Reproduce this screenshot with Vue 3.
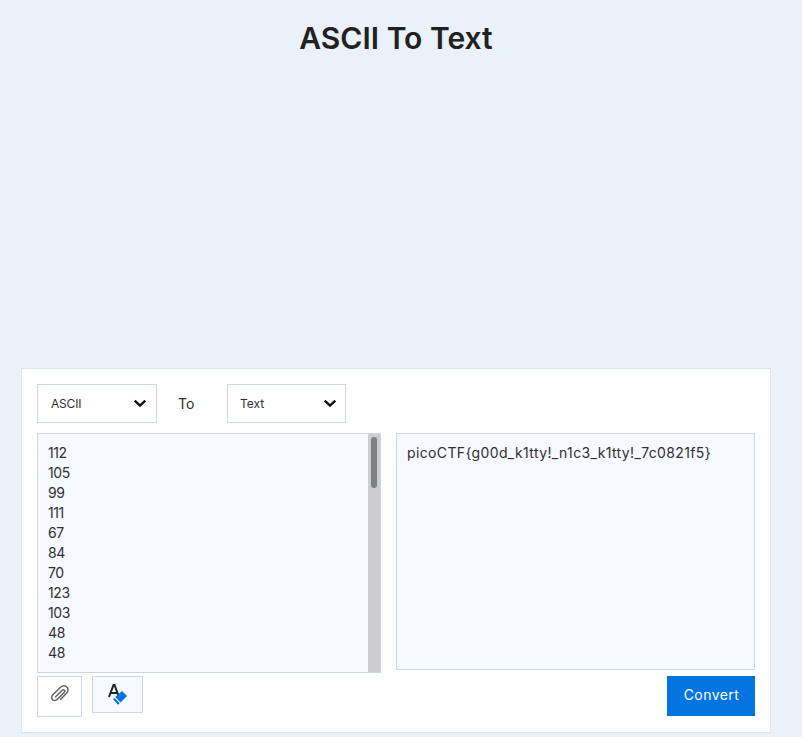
<script setup>
const codes = [112, 105, 99, 111, 67, 84, 70, 123, 103, 48, 48]
const output = 'picoCTF{g00d_k1tty!_n1c3_k1tty!_7c0821f5}'
</script>

<template>
  <main class="page">
    <h1 class="title">ASCII To Text</h1>
    <section class="card">
      <div class="selectors">
        <div class="select">
          <span class="ascii">ASCII</span>
          <svg class="chevron" width="14" height="9" viewBox="0 0 14 9"><path d="M1.700 1.700 7 6.700l5.300-5" /></svg>
        </div>
        <span class="to">To</span>
        <div class="select second">
          <span>Text</span>
          <svg class="chevron" width="14" height="9" viewBox="0 0 14 9"><path d="M1.700 1.700 7 6.700l5.300-5" /></svg>
        </div>
      </div>
      <div class="panels">
        <div class="input">
          <div class="codes">
            <div v-for="(c, i) in codes" :key="i">{{ c }}</div>
          </div>
          <div class="track"><div class="thumb"></div></div>
        </div>
        <div class="output"><span>{{ output }}</span></div>
      </div>
      <div class="actions">
        <button class="attach" aria-label="Attach file">
          <svg width="20" height="20" viewBox="0 0 20 20">
            <path d="M5.600 12.700 12 6.500c1.900-1.700 3.800.2 2.100 2L7.900 14.800c-1.300 1.300-3.100 2.600-5 1.200-1.700-1.500-1.500-3.900.2-5.500L10.300 3.500c2-1.900 4.600-2.100 6.400-.5 1.800 1.700 1.700 4.200-.2 6.200L10.700 15.300" />
          </svg>
        </button>
        <button class="clear" aria-label="Clear text">
          <svg width="20" height="22" viewBox="0 0 20 22">
            <path class="letter" d="M2 14 6.500 2h1L12 14M3.700 10h6.700" />
            <path class="eraser" d="M15 8 20 13.100 13.600 19.400 8.200 14z" />
            <path class="eraser" d="M7.400 14.900 12.700 20.200 11.200 21.700 6 16.300z" />
          </svg>
        </button>
        <button class="convert">Convert</button>
      </div>
    </section>
  </main>
</template>

<style>
body {
  background: #eaf1f9;
}
</style>

<style scoped>
.page {
  box-sizing: border-box;
  height: 737px;
  padding: 14px 31px 0 21px;
  overflow: hidden;
  font-family: Inter, "Open Sans", sans-serif;
  color: #303030;
}
.title {
  margin: 0;
  height: 354px;
  font-size: 30px;
  line-height: 49px;
  font-weight: 600;
  text-align: center;
  color: #212121;
}
.card {
  box-sizing: border-box;
  height: 365px;
  padding: 15px;
  border: 1px solid #dde6f0;
  background: #fff;
}
.selectors {
  display: flex;
  align-items: center;
  height: 39px;
}
.select {
  box-sizing: border-box;
  display: flex;
  align-items: center;
  justify-content: space-between;
  width: 120px;
  height: 39px;
  padding: 0 9px 0 13px;
  border: 1px solid #ced7e7;
  font-size: 12px;
}
.select.second {
  width: 119px;
  padding: 0 8px 0 12px;
}
.ascii {
  letter-spacing: -0.2px;
}
.chevron {
  fill: none;
  stroke: #111;
  stroke-width: 2.4;
}
.to {
  box-sizing: border-box;
  width: 70px;
  padding-left: 21px;
  font-size: 14px;
}
.panels {
  display: flex;
  align-items: flex-start;
  gap: 15px;
  height: 243px;
  margin-top: 10px;
}
.input,
.output {
  box-sizing: border-box;
  border: 1px solid #cad7e6;
  background: #f6f9fe;
  font-size: 14px;
  line-height: 20px;
}
.input {
  display: flex;
  justify-content: space-between;
  width: 344px;
  height: 240px;
}
.codes {
  padding: 9px 10px;
  letter-spacing: -0.4px;
}
.track {
  box-sizing: border-box;
  width: 12px;
  padding: 3px 3px 0;
  background: #cdcdcd;
}
.thumb {
  height: 51px;
  border-radius: 3px;
  background: #7f8181;
}
.output {
  width: 359px;
  height: 237px;
  padding: 9px 10px;
  letter-spacing: 0.36px;
  white-space: nowrap;
}
.actions {
  display: flex;
  align-items: flex-start;
}
button {
  box-sizing: border-box;
  display: flex;
  align-items: center;
  justify-content: center;
  padding: 0;
  border: 1px solid #ced7e7;
  background: #fff;
  font-family: inherit;
}
.attach {
  width: 45px;
  height: 41px;
  padding-bottom: 5px;
}
.attach path {
  fill: none;
  stroke: #606060;
  stroke-width: 1.5;
  stroke-linecap: round;
}
.clear {
  width: 51px;
  height: 37px;
  padding: 0 1px 1px 0;
  margin-left: 10px;
  background: #f6f9fe;
}
.letter {
  fill: none;
  stroke: #222;
  stroke-width: 2;
}
.eraser {
  fill: #0474e0;
}
.convert {
  width: 88px;
  height: 40px;
  margin-left: auto;
  padding: 0 0 3px 1px;
  border: 0;
  background: #0474e0;
  color: #fff;
  font-size: 14px;
  letter-spacing: 0.45px;
}
</style>
